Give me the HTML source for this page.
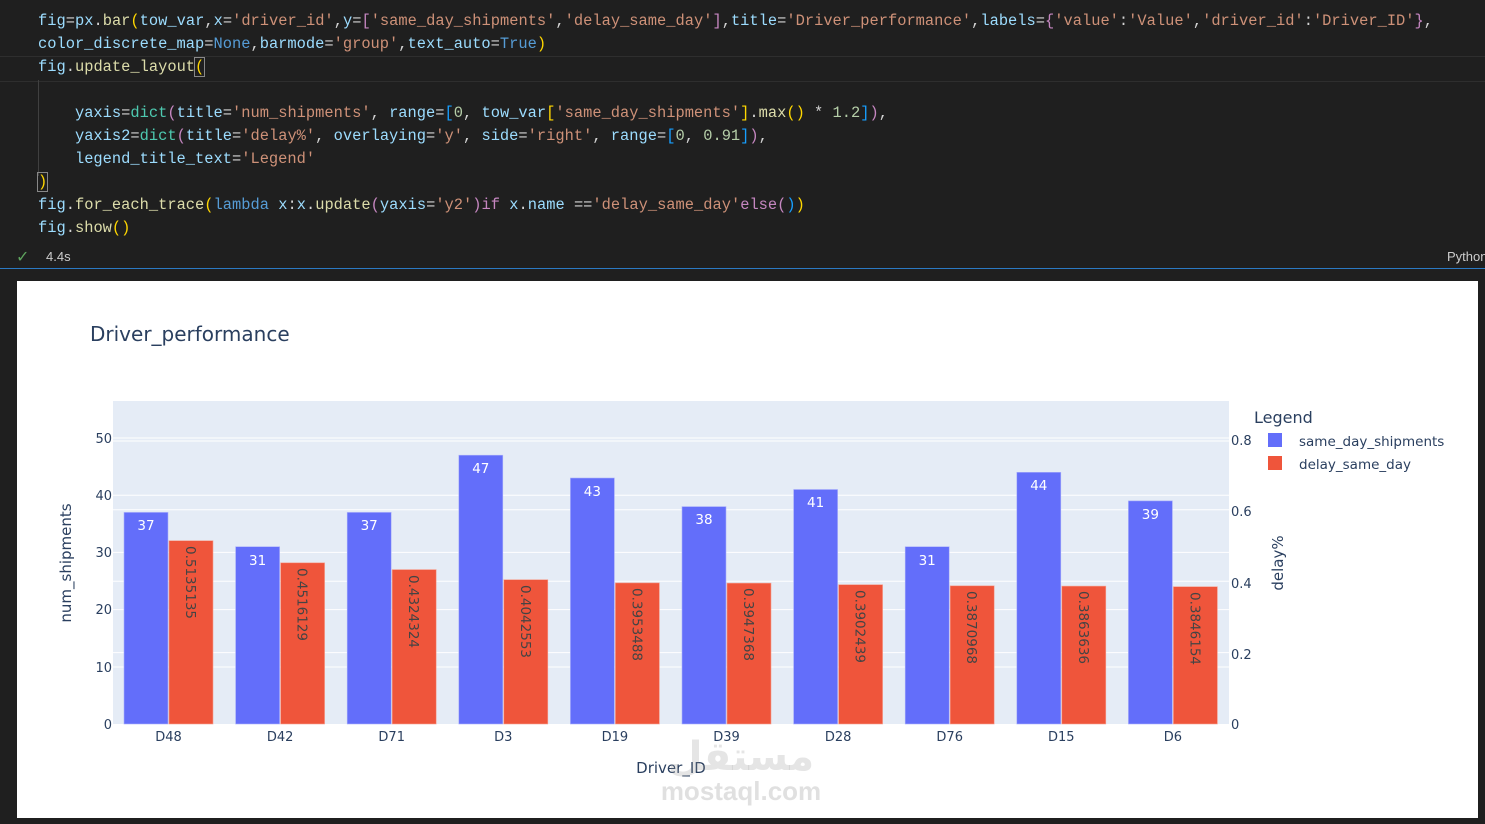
<!DOCTYPE html>
<html><head><meta charset="utf-8"><style>
body{margin:0;width:1485px;height:824px;background:#1f1f1f;overflow:hidden;position:relative;font-family:"Liberation Sans",sans-serif}
.code{position:absolute;left:38px;top:10px;font-family:"Liberation Mono",monospace;font-size:15.4px;color:#d4d4d4;white-space:pre}
.l{position:absolute;left:0;height:23px;line-height:23px}
.f{color:#dcdcaa}.v{color:#9cdcfe}.s{color:#ce9178}.k{color:#569cd6}.p{color:#c586c0}.y{color:#ffd700}.g{color:#4ec9b0}.n{color:#b5cea8}.b{color:#179fff}
</style></head><body>
<div style="position:absolute;left:0;top:56px;width:1485px;height:24px;border-top:1px solid #2e2e2e;border-bottom:1px solid #2e2e2e"></div>
<div style="position:absolute;left:38px;top:80px;width:1px;height:96px;background:#404040"></div>
<div class="code">
<div class="l" style="top:0"><span class="v">fig</span>=<span class="v">px</span>.<span class="f">bar</span><span class="y">(</span><span class="v">tow_var</span>,<span class="v">x</span>=<span class="s">'driver_id'</span>,<span class="v">y</span>=<span class="p">[</span><span class="s">'same_day_shipments'</span>,<span class="s">'delay_same_day'</span><span class="p">]</span>,<span class="v">title</span>=<span class="s">'Driver_performance'</span>,<span class="v">labels</span>=<span class="p">{</span><span class="s">'value'</span>:<span class="s">'Value'</span>,<span class="s">'driver_id'</span>:<span class="s">'Driver_ID'</span><span class="p">}</span>,</div>
<div class="l" style="top:23px"><span class="v">color_discrete_map</span>=<span class="k">None</span>,<span class="v">barmode</span>=<span class="s">'group'</span>,<span class="v">text_auto</span>=<span class="k">True</span><span class="y">)</span></div>
<div class="l" style="top:46px"><span class="v">fig</span>.<span class="f">update_layout</span><span class="y" style="outline:1px solid #888">(</span></div>
<div class="l" style="top:92px">    <span class="v">yaxis</span>=<span class="g">dict</span><span class="p">(</span><span class="v">title</span>=<span class="s">'num_shipments'</span>, <span class="v">range</span>=<span class="b">[</span><span class="n">0</span>, <span class="v">tow_var</span><span class="y">[</span><span class="s">'same_day_shipments'</span><span class="y">]</span>.<span class="f">max</span><span class="y">()</span> * <span class="n">1.2</span><span class="b">]</span><span class="p">)</span>,</div>
<div class="l" style="top:115px">    <span class="v">yaxis2</span>=<span class="g">dict</span><span class="p">(</span><span class="v">title</span>=<span class="s">'delay%'</span>, <span class="v">overlaying</span>=<span class="s">'y'</span>, <span class="v">side</span>=<span class="s">'right'</span>, <span class="v">range</span>=<span class="b">[</span><span class="n">0</span>, <span class="n">0.91</span><span class="b">]</span><span class="p">)</span>,</div>
<div class="l" style="top:138px">    <span class="v">legend_title_text</span>=<span class="s">'Legend'</span></div>
<div class="l" style="top:161px"><span class="y" style="outline:1px solid #888">)</span></div>
<div class="l" style="top:184px"><span class="v">fig</span>.<span class="f">for_each_trace</span><span class="y">(</span><span class="k">lambda</span> <span class="v">x</span>:<span class="v">x</span>.<span class="f">update</span><span class="p">(</span><span class="v">yaxis</span>=<span class="s">'y2'</span><span class="p">)</span><span class="p">if</span> <span class="v">x</span>.<span class="v">name</span> ==<span class="s">'delay_same_day'</span><span class="p">else</span><span class="p">(</span><span class="b">)</span><span class="y">)</span></div>
<div class="l" style="top:207px"><span class="v">fig</span>.<span class="f">show</span><span class="y">()</span></div>
</div>
<div style="position:absolute;left:16px;top:247px;color:#5ea35e;font-size:16px">✓</div>
<div style="position:absolute;left:46px;top:249px;color:#ccc;font-size:13px">4.4s</div>
<div style="position:absolute;left:1447px;top:249px;color:#ccc;font-size:13px">Python</div>
<div style="position:absolute;left:0;top:268px;width:1485px;height:1px;background:#2b79c2"></div>
<svg style="position:absolute;left:0;top:0" width="1485" height="824" font-family="DejaVu Sans, sans-serif">
<rect x="17" y="281" width="1461" height="537" fill="#fff"/>
<text x="90" y="341" font-size="20" fill="#2a3f5f">Driver_performance</text>
<rect x="113" y="401" width="1116" height="323" fill="#e5ecf6"/>
<g stroke="#fff" stroke-width="1">
<line x1="113" x2="1229" y1="667" y2="667"/><line x1="113" x2="1229" y1="609.6" y2="609.6"/><line x1="113" x2="1229" y1="552.4" y2="552.4"/><line x1="113" x2="1229" y1="495.2" y2="495.2"/><line x1="113" x2="1229" y1="438" y2="438"/>
<line x1="113" x2="1229" y1="652.6" y2="652.6"/><line x1="113" x2="1229" y1="581.2" y2="581.2"/><line x1="113" x2="1229" y1="509.8" y2="509.8"/><line x1="113" x2="1229" y1="441" y2="441"/>
</g>
<g font-size="13" fill="#2a3f5f" text-anchor="end">
<text x="112" y="729">0</text><text x="112" y="672">10</text><text x="112" y="614">20</text><text x="112" y="557">30</text><text x="112" y="500">40</text><text x="112" y="443">50</text>
</g>
<g font-size="13" fill="#2a3f5f">
<text x="1231" y="729">0</text><text x="1231" y="659">0.2</text><text x="1231" y="588">0.4</text><text x="1231" y="516">0.6</text>
</g>
<svg x="1229" y="430" width="23" height="20"><text x="2" y="15" font-size="13" fill="#2a3f5f">0.8</text></svg>
<text transform="translate(71,563) rotate(-90)" font-size="15" fill="#2a3f5f" text-anchor="middle">num_shipments</text>
<text transform="translate(1283,563) rotate(-90)" font-size="15" fill="#2a3f5f" text-anchor="middle">delay%</text>
<text x="671" y="773" font-size="15" fill="#2a3f5f" text-anchor="middle">Driver_ID</text>
<g stroke-width="0.6">
<g fill="#636efa" stroke="#aab0fb">
<rect x="124" y="512.4" width="44" height="211.6"/><rect x="235.6" y="546.7" width="44" height="177.3"/><rect x="347.2" y="512.4" width="44" height="211.6"/><rect x="458.8" y="455.2" width="44" height="268.8"/><rect x="570.4" y="478" width="44" height="246"/><rect x="682" y="506.6" width="44" height="217.4"/><rect x="793.6" y="489.5" width="44" height="234.5"/><rect x="905.2" y="546.7" width="44" height="177.3"/><rect x="1016.8" y="472.3" width="44" height="251.7"/><rect x="1128.4" y="500.9" width="44" height="223.1"/>
</g>
<g fill="#ef553b" stroke="#f5a090">
<rect x="169" y="540.7" width="44" height="183.3"/><rect x="280.6" y="562.8" width="44" height="161.2"/><rect x="392.2" y="569.6" width="44" height="154.4"/><rect x="503.8" y="579.7" width="44" height="144.3"/><rect x="615.4" y="582.9" width="44" height="141.1"/><rect x="727" y="583.1" width="44" height="140.9"/><rect x="838.6" y="584.7" width="44" height="139.3"/><rect x="950.2" y="585.8" width="44" height="138.2"/><rect x="1061.8" y="586.1" width="44" height="137.9"/><rect x="1173.4" y="586.7" width="44" height="137.3"/>
</g>
</g>
<g font-size="13.5" fill="#fff" text-anchor="middle">
<text x="146" y="530">37</text><text x="257.6" y="565">31</text><text x="369.2" y="530">37</text><text x="480.8" y="473">47</text><text x="592.4" y="496">43</text><text x="704" y="524">38</text><text x="815.6" y="507">41</text><text x="927.2" y="565">31</text><text x="1038.8" y="490">44</text><text x="1150.4" y="519">39</text>
</g>
<g font-size="13.5" fill="#444">
<text transform="translate(186,546) rotate(90)">0.5135135</text>
<text transform="translate(297.6,568) rotate(90)">0.4516129</text>
<text transform="translate(409.2,575) rotate(90)">0.4324324</text>
<text transform="translate(520.8,585) rotate(90)">0.4042553</text>
<text transform="translate(632.4,588) rotate(90)">0.3953488</text>
<text transform="translate(744,588) rotate(90)">0.3947368</text>
<text transform="translate(855.6,590) rotate(90)">0.3902439</text>
<text transform="translate(967.2,591) rotate(90)">0.3870968</text>
<text transform="translate(1078.8,591) rotate(90)">0.3863636</text>
<text transform="translate(1190.4,592) rotate(90)">0.3846154</text>
</g>
<g font-size="13" fill="#2a3f5f" text-anchor="middle">
<text x="168.5" y="741">D48</text><text x="280.1" y="741">D42</text><text x="391.7" y="741">D71</text><text x="503.3" y="741">D3</text><text x="614.9" y="741">D19</text><text x="726.5" y="741">D39</text><text x="838.1" y="741">D28</text><text x="949.7" y="741">D76</text><text x="1061.3" y="741">D15</text><text x="1172.9" y="741">D6</text>
</g>
<text x="1254" y="423" font-size="16" fill="#2a3f5f">Legend</text>
<rect x="1268" y="433" width="14" height="14" fill="#636efa"/>
<rect x="1268" y="456" width="14" height="14" fill="#ef553b"/>
<text x="1299" y="446" font-size="13.5" fill="#2a3f5f">same_day_shipments</text>
<text x="1299" y="469" font-size="13.5" fill="#2a3f5f">delay_same_day</text>
<text x="741" y="800" font-size="26" font-weight="bold" fill="#999" fill-opacity="0.3" text-anchor="middle" font-family="Liberation Sans, sans-serif">mostaql.com</text>
<text x="741" y="770" font-size="40" font-weight="bold" fill="#999" fill-opacity="0.25" text-anchor="middle">مستقل</text>
</svg>
</body></html>
